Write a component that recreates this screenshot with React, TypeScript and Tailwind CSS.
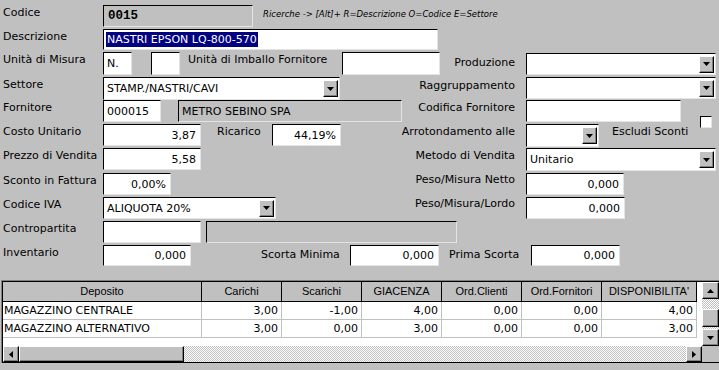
import clsx from 'clsx';
import type { ReactNode } from 'react';

const sunken = 'border border-t-black border-l-black border-r-[#e4e4e4] border-b-[#e4e4e4]';
const raised = 'border border-t-white border-l-white border-r-black border-b-black shadow-[inset_-1px_-1px_0_#808080]';
const checker = 'bg-[repeating-conic-gradient(#ffffff_0_25%,#c0c0c0_0_50%)] bg-[length:2px_2px]';

function Arrow({ dir }: { dir: 'up' | 'down' | 'left' | 'right' }) {
  const pts = {
    down: '0,0 7,0 3.5,4',
    up: '0,4 7,4 3.5,0',
    left: '4,0 4,7 0,3.5',
    right: '0,0 0,7 4,3.5',
  }[dir];
  const vertical = dir === 'up' || dir === 'down';
  return (
    <svg width={vertical ? 7 : 4} height={vertical ? 4 : 7} viewBox={vertical ? '0 0 7 4' : '0 0 4 7'}>
      <polygon points={pts} fill="#000" />
    </svg>
  );
}

function Field({ className, right, gray, children }: { className: string; right?: boolean; gray?: boolean; children?: ReactNode }) {
  return (
    <div
      className={clsx(
        sunken,
        'flex items-center px-[3px] whitespace-nowrap overflow-hidden',
        gray ? 'bg-[#c0c0c0]' : 'bg-white',
        right && 'justify-end pr-[4px]',
        className,
      )}
    >
      {children}
    </div>
  );
}

function Combo({ className, value }: { className: string; value?: string }) {
  return (
    <div className={clsx(sunken, 'bg-white flex items-center', className)}>
      <span className="flex-1 pl-[3px] whitespace-nowrap overflow-hidden">{value}</span>
      <div className={clsx(raised, 'w-[15px] h-[17px] mr-[1px] bg-[#c0c0c0] flex items-center justify-center')}>
        <Arrow dir="down" />
      </div>
    </div>
  );
}

function Label({ children }: { children: ReactNode }) {
  return <div className="w-[103px] pl-[3px] mt-[1px] whitespace-nowrap">{children}</div>;
}

function RightLabel({ children, top = 'mt-[1px]' }: { children: ReactNode; top?: string }) {
  return (
    <div className="flex-1 flex justify-end pr-[11px]">
      <span className={clsx('whitespace-nowrap', top)}>{children}</span>
    </div>
  );
}

const cols = [
  { name: 'Deposito', w: 'w-[199px]' },
  { name: 'Carichi', w: 'w-[80px]' },
  { name: 'Scarichi', w: 'w-[80px]' },
  { name: 'GIACENZA', w: 'w-[80px]' },
  { name: 'Ord.Clienti', w: 'w-[80px]' },
  { name: 'Ord.Fornitori', w: 'w-[80px]' },
  { name: "DISPONIBILITA'", w: 'w-[95px]' },
];

const rows = [
  ['MAGAZZINO CENTRALE', '3,00', '-1,00', '4,00', '0,00', '0,00', '4,00'],
  ['MAGAZZINO ALTERNATIVO', '3,00', '0,00', '3,00', '0,00', '0,00', '3,00'],
];

export default function App() {
  return (
    <div className="w-[719px] h-[370px] overflow-hidden bg-[#c0c0c0] text-black [font-family:'DejaVu_Sans',sans-serif] text-[11px] leading-[13px]">
      <div className="pt-[5px]">
        {/* Codice */}
        <div className="flex h-[24px]">
          <Label>Codice</Label>
          <Field gray className="w-[150px] h-[22px]">
            <span className="[font-family:'Liberation_Mono',monospace] font-bold text-[12.5px] pl-[1px]">0015</span>
          </Field>
          <span className="ml-[10px] mt-[3px] italic text-[8.5px] whitespace-nowrap">
            Ricerche -&gt; [Alt]+ R=Descrizione O=Codice E=Settore
          </span>
        </div>

        {/* Descrizione */}
        <div className="flex h-[23px]">
          <Label>Descrizione</Label>
          <Field className="w-[335px] h-[21px] !px-[2px]">
            <span className="bg-[#000080] text-white px-[1px] leading-[15px]">NASTRI EPSON LQ-800-570</span>
          </Field>
        </div>

        {/* Unità di Misura */}
        <div className="flex h-[25px]">
          <Label>Unità di Misura</Label>
          <Field className="w-[29px] h-[23px]">N.</Field>
          <Field className="w-[29px] h-[23px] ml-[19px]" />
          <span className="w-[154px] ml-[8px] mt-[1px] whitespace-nowrap">Unità di Imballo Fornitore</span>
          <Field className="w-[98px] h-[23px]" />
          <RightLabel top="mt-[4px]">Produzione</RightLabel>
          <div className="w-[193px] pt-[1px]">
            <Combo className="w-[190px] h-[22px]" />
          </div>
        </div>

        {/* Settore */}
        <div className="flex h-[23px]">
          <Label>Settore</Label>
          <Combo className="w-[237px] h-[23px]" value="STAMP./NASTRI/CAVI" />
          <RightLabel top="mt-[2px]">Raggruppamento</RightLabel>
          <div className="w-[193px]">
            <Combo className="w-[190px] h-[22px]" />
          </div>
        </div>

        {/* Fornitore */}
        <div className="flex h-[24px]">
          <Label>Fornitore</Label>
          <Field className="w-[58px] h-[22px]">000015</Field>
          <Field gray className="w-[224px] h-[22px] ml-[17px]">
            METRO SEBINO SPA
          </Field>
          <RightLabel>Codifica Fornitore</RightLabel>
          <div className="w-[193px] flex">
            <Field className="w-[155px] h-[22px]" />
            <div className={clsx(sunken, 'bg-white w-[12px] h-[12px] ml-[19px] mt-[16px]')} />
          </div>
        </div>

        {/* Costo Unitario */}
        <div className="flex h-[24px]">
          <Label>Costo Unitario</Label>
          <Field right className="w-[98px] h-[22px]">3,87</Field>
          <span className="w-[55px] ml-[16px] mt-[1px]">Ricarico</span>
          <Field right className="w-[69px] h-[22px]">44,19%</Field>
          <RightLabel>Arrotondamento alle</RightLabel>
          <div className="w-[193px] flex">
            <Combo className="w-[73px] h-[23px]" />
            <span className="ml-[13px] mt-[1px] whitespace-nowrap">Escludi Sconti</span>
          </div>
        </div>

        {/* Prezzo di Vendita */}
        <div className="flex h-[25px]">
          <Label>Prezzo di Vendita</Label>
          <Field right className="w-[98px] h-[22px]">5,58</Field>
          <RightLabel top="mt-[1px]">Metodo di Vendita</RightLabel>
          <div className="w-[193px]">
            <Combo className="w-[190px] h-[23px]" value="Unitario" />
          </div>
        </div>

        {/* Sconto in Fattura */}
        <div className="flex h-[24px]">
          <Label>Sconto in Fattura</Label>
          <Field right className="w-[68px] h-[22px]">0,00%</Field>
          <RightLabel top="mt-[0px]">Peso/Misura Netto</RightLabel>
          <div className="w-[193px]">
            <Field right className="w-[98px] h-[22px]">0,000</Field>
          </div>
        </div>

        {/* Codice IVA */}
        <div className="flex h-[24px]">
          <Label>Codice IVA</Label>
          <Combo className="w-[173px] h-[22px]" value="ALIQUOTA 20%" />
          <RightLabel top="mt-[0px]">Peso/Misura/Lordo</RightLabel>
          <div className="w-[193px]">
            <Field right className="w-[99px] h-[22px]">0,000</Field>
          </div>
        </div>

        {/* Contropartita */}
        <div className="flex h-[24px]">
          <Label>Contropartita</Label>
          <Field className="w-[98px] h-[22px]" />
          <Field gray className="w-[251px] h-[22px] ml-[5px]" />
        </div>

        {/* Inventario */}
        <div className="flex h-[35px]">
          <Label>Inventario</Label>
          <Field right className="w-[88px] h-[21px]">0,000</Field>
          <span className="w-[89px] ml-[70px] mt-[3px] whitespace-nowrap">Scorta Minima</span>
          <Field right className="w-[89px] h-[21px]">0,000</Field>
          <span className="w-[82px] ml-[10px] mt-[3px] whitespace-nowrap">Prima Scorta</span>
          <Field right className="w-[89px] h-[21px]">0,000</Field>
        </div>
      </div>

      {/* Grid */}
      <div className="ml-[1px] border-t border-l border-[#808080]">
        <div className="border-t border-l border-b border-black h-[82px] flex flex-col">
          <div className="flex h-[64px]">
            <div className="flex-1 bg-white">
              <div className="flex h-[20px] bg-[#c0c0c0]">
                {cols.map((c) => (
                  <div
                    key={c.name}
                    className={clsx(
                      c.w,
                      "shrink-0 border-r border-b border-black flex items-center justify-center [font-family:'Liberation_Sans',sans-serif] text-[11px] whitespace-nowrap overflow-hidden",
                    )}
                  >
                    {c.name}
                  </div>
                ))}
                <div className="flex-1 bg-white" />
              </div>
              {rows.map((r) => (
                <div key={r[0]} className="flex h-[18px]">
                  {r.map((v, i) => (
                    <div
                      key={i}
                      className={clsx(
                        cols[i].w,
                        'shrink-0 border-r border-b border-[#c0c0c0] flex items-center whitespace-nowrap',
                        i === 0 ? 'pl-[1px]' : 'justify-end pr-[3px]',
                      )}
                    >
                      {v}
                    </div>
                  ))}
                </div>
              ))}
            </div>
            <div className="w-[17px] flex flex-col">
              <div className={clsx(raised, 'h-[17px] bg-[#c0c0c0] flex items-center justify-center')}>
                <Arrow dir="up" />
              </div>
              <div className={clsx(checker, 'h-[10px]')} />
              <div className={clsx(raised, 'h-[18px] bg-[#c0c0c0]')} />
              <div className={clsx(checker, 'flex-1')} />
              <div className={clsx(raised, 'h-[17px] bg-[#c0c0c0] flex items-center justify-center')}>
                <Arrow dir="down" />
              </div>
            </div>
          </div>
          <div className="flex h-[16px]">
            <div className="flex-1 flex">
              <div className={clsx(raised, 'w-[16px] bg-[#c0c0c0] flex items-center justify-center')}>
                <Arrow dir="left" />
              </div>
              <div className={clsx(raised, 'w-[165px] bg-[#c0c0c0]')} />
              <div className={clsx(checker, 'flex-1')} />
              <div className={clsx(raised, 'w-[16px] bg-[#c0c0c0] flex items-center justify-center')}>
                <Arrow dir="right" />
              </div>
            </div>
            <div className="w-[17px] bg-[#c0c0c0]" />
          </div>
        </div>
      </div>
    </div>
  );
}
